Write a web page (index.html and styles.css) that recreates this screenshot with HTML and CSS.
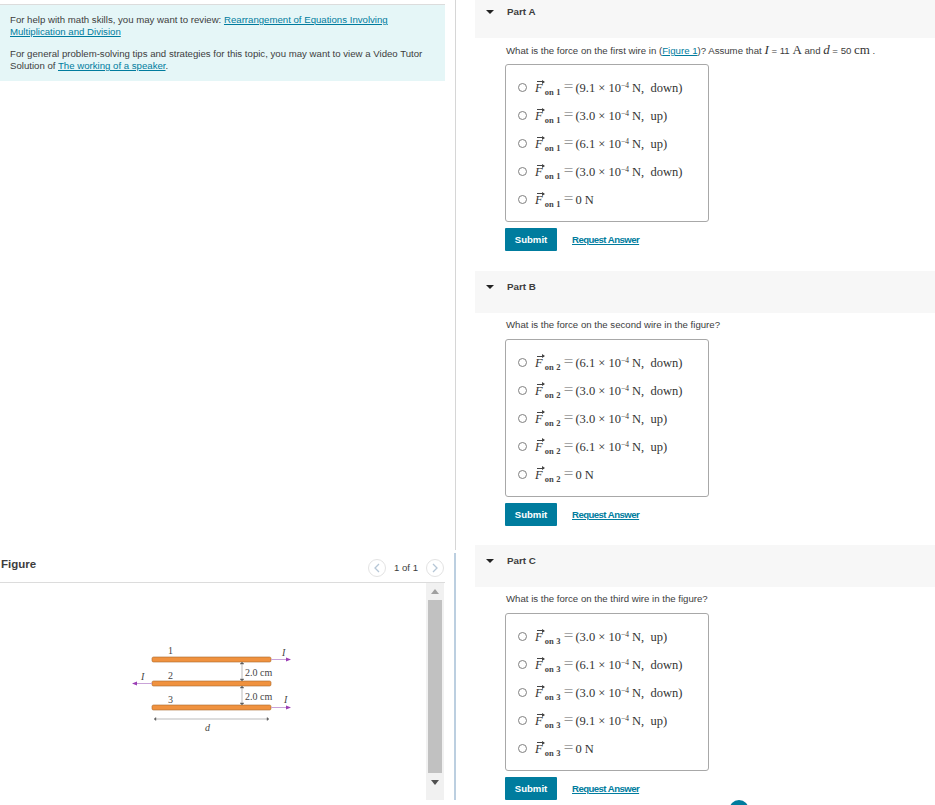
FILE: index.html
```html
<!DOCTYPE html>
<html lang="en">
<head>
<meta charset="utf-8">
<title>Part A, B, C</title>
<link rel="stylesheet" href="styles.css">
</head>
<body>
<div class="page">
  <div class="left">
    <section class="hints">
      <div class="hint-box">
        <p>For help with math skills, you may want to review: <a href="#">Rearrangement of Equations Involving Multiplication and Division</a></p>
        <p>For general problem-solving tips and strategies for this topic, you may want to view a Video Tutor Solution of <a href="#">The working of a speaker</a>.</p>
      </div>
    </section>
    <section class="figure">
      <header class="fig-head">
        <h2>Figure</h2>
        <div class="pager">
          <span class="circle"><svg width="8" height="10" viewBox="0 0 8 10"><path d="M6 1 2 5l4 4" fill="none" stroke="#b5c6d6" stroke-width="1.3"/></svg></span>
          <span class="count">1 of 1</span>
          <span class="circle"><svg width="8" height="10" viewBox="0 0 8 10"><path d="M2 1l4 4-4 4" fill="none" stroke="#b5c6d6" stroke-width="1.3"/></svg></span>
        </div>
      </header>
      <div class="fig-body">
        <div class="fig-canvas">
          <svg class="diagram" width="190" height="105" viewBox="0 0 190 105">
            <g class="wire">
              <rect x="32" y="22" width="119" height="5" rx="1.5"/>
              <rect x="32" y="46" width="119" height="5" rx="1.5"/>
              <rect x="32" y="70" width="119" height="5" rx="1.5"/>
            </g>
            <g class="current">
              <path d="M151 24.500h17M151 72.500h17M32 48.500H17"/>
            </g>
            <g class="current-head">
              <path d="M171 24.500l-5-2v4zM171 72.500l-5-2v4zM12 48.500l5-2v4z"/>
            </g>
            <g class="dim">
              <path d="M122 28v17M122 52v17M35 84h113"/>
              <path d="M122 27l-2 2h4zM122 46l-2-2h4zM122 51l-2 2h4zM122 70l-2-2h4zM34 84l2-1.500v3zM149 84l-2-1.500v3z"/>
            </g>
            <text class="fig-text" x="48" y="19">1</text>
            <text class="fig-text" x="48" y="44">2</text>
            <text class="fig-text" x="48" y="68">3</text>
            <text class="fig-text" x="125" y="41">2.0 cm</text>
            <text class="fig-text" x="125" y="65">2.0 cm</text>
            <text class="fig-text ital" x="162" y="21">I</text>
            <text class="fig-text ital" x="21" y="45">I</text>
            <text class="fig-text ital" x="164" y="68">I</text>
            <text class="fig-text ital" x="85" y="96">d</text>
          </svg>
        </div>
        <div class="scrollbar">
          <span class="arrow up"></span>
          <span class="thumb"></span>
          <span class="arrow down"></span>
        </div>
      </div>
    </section>
  </div>

  <main class="right">
    <section class="part part-a">
      <header class="part-head"><span class="caret"></span><h3>Part A</h3></header>
      <p class="question">What is the force on the first wire in (<a href="#">Figure 1</a>)? Assume that <i class="m big">I</i> = 11 <span class="m big">A</span> and <i class="m big">d</i> = 50 <span class="m big">cm</span> .</p>
      <div class="choices">
        <label class="choice"><input type="radio" name="a"><span class="m"><span class="vec">F</span><sub>on 1</sub><span class="eq">=</span>(9.1 × 10<sup>−4</sup> N,&nbsp; down)</span></label>
        <label class="choice"><input type="radio" name="a"><span class="m"><span class="vec">F</span><sub>on 1</sub><span class="eq">=</span>(3.0 × 10<sup>−4</sup> N,&nbsp; up)</span></label>
        <label class="choice"><input type="radio" name="a"><span class="m"><span class="vec">F</span><sub>on 1</sub><span class="eq">=</span>(6.1 × 10<sup>−4</sup> N,&nbsp; up)</span></label>
        <label class="choice"><input type="radio" name="a"><span class="m"><span class="vec">F</span><sub>on 1</sub><span class="eq">=</span>(3.0 × 10<sup>−4</sup> N,&nbsp; down)</span></label>
        <label class="choice"><input type="radio" name="a"><span class="m"><span class="vec">F</span><sub>on 1</sub><span class="eq">=</span>0 N</span></label>
      </div>
      <div class="actions"><button class="submit">Submit</button><a class="request" href="#">Request Answer</a></div>
    </section>

    <section class="part">
      <header class="part-head"><span class="caret"></span><h3>Part B</h3></header>
      <p class="question">What is the force on the second wire in the figure?</p>
      <div class="choices">
        <label class="choice"><input type="radio" name="b"><span class="m"><span class="vec">F</span><sub>on 2</sub><span class="eq">=</span>(6.1 × 10<sup>−4</sup> N,&nbsp; down)</span></label>
        <label class="choice"><input type="radio" name="b"><span class="m"><span class="vec">F</span><sub>on 2</sub><span class="eq">=</span>(3.0 × 10<sup>−4</sup> N,&nbsp; down)</span></label>
        <label class="choice"><input type="radio" name="b"><span class="m"><span class="vec">F</span><sub>on 2</sub><span class="eq">=</span>(3.0 × 10<sup>−4</sup> N,&nbsp; up)</span></label>
        <label class="choice"><input type="radio" name="b"><span class="m"><span class="vec">F</span><sub>on 2</sub><span class="eq">=</span>(6.1 × 10<sup>−4</sup> N,&nbsp; up)</span></label>
        <label class="choice"><input type="radio" name="b"><span class="m"><span class="vec">F</span><sub>on 2</sub><span class="eq">=</span>0 N</span></label>
      </div>
      <div class="actions"><button class="submit">Submit</button><a class="request" href="#">Request Answer</a></div>
    </section>

    <section class="part">
      <header class="part-head"><span class="caret"></span><h3>Part C</h3></header>
      <p class="question">What is the force on the third wire in the figure?</p>
      <div class="choices">
        <label class="choice"><input type="radio" name="c"><span class="m"><span class="vec">F</span><sub>on 3</sub><span class="eq">=</span>(3.0 × 10<sup>−4</sup> N,&nbsp; up)</span></label>
        <label class="choice"><input type="radio" name="c"><span class="m"><span class="vec">F</span><sub>on 3</sub><span class="eq">=</span>(6.1 × 10<sup>−4</sup> N,&nbsp; down)</span></label>
        <label class="choice"><input type="radio" name="c"><span class="m"><span class="vec">F</span><sub>on 3</sub><span class="eq">=</span>(3.0 × 10<sup>−4</sup> N,&nbsp; down)</span></label>
        <label class="choice"><input type="radio" name="c"><span class="m"><span class="vec">F</span><sub>on 3</sub><span class="eq">=</span>(9.1 × 10<sup>−4</sup> N,&nbsp; up)</span></label>
        <label class="choice"><input type="radio" name="c"><span class="m"><span class="vec">F</span><sub>on 3</sub><span class="eq">=</span>0 N</span></label>
      </div>
      <div class="actions"><button class="submit">Submit</button><a class="request" href="#">Request Answer</a></div>
    </section>
  </main>
</div>
<span class="help-badge"></span>
</body>
</html>
```
FILE: styles.css
```css
* { box-sizing: border-box; }
html, body { height: 100%; }
body {
  margin: 0;
  height: 805px;
  overflow: hidden;
  background: #fff;
  color: #3d3d3d;
  font-family: "Liberation Sans", Arial, sans-serif;
  font-size: 9.630px;
}
a { color: #007c9e; text-decoration: underline; }
p { margin: 0; }

.page { display: flex; height: 800px; align-items: flex-start; }

/* left column */
.left { width: 456px; height: 800px; display: flex; flex-direction: column; flex: none; }
.hints { height: 550px; padding: 4px 10px 0 0; border-right: 1px solid #d6d6d6; flex: none; }
.hint-box {
  background: #e5f6f7;
  border-top: 1px solid #dcdcdc;
  height: 77px;
  padding: 9px 10px 0;
  line-height: 12px;
}
.hint-box p + p { margin-top: 10px; }

.figure { margin-top: 3px; flex: 1; display: flex; flex-direction: column; border-right: 2px solid #bccfe0; min-height: 0; }
.fig-head {
  height: 30px;
  margin-right: 9px;
  padding: 0 1px;
  display: flex;
  align-items: center;
  justify-content: space-between;
  border-bottom: 1px solid #dcdcdc;
}
.fig-head h2 { margin: 0 0 8px; font-size: 11.500px; font-weight: bold; color: #3d3d3d; }
.pager { display: flex; align-items: center; gap: 8px; }
.count { font-size: 9.600px; color: #3d3d3d; }
.circle {
  width: 18px; height: 18px;
  border: 1px solid #e3e3e3;
  border-radius: 50%;
  display: flex; align-items: center; justify-content: center;
}
.fig-body { flex: 1; display: flex; margin-right: 10px; min-height: 0; }
.fig-canvas { flex: 1; padding: 52px 0 0 120px; }
.diagram { display: block; }
.wire rect { fill: #f0923f; stroke: #a8682c; stroke-width: .6; }
.current { fill: none; stroke: #c9a3d8; stroke-width: 1; }
.current-head { fill: #9b3fb5; }
.dim path { fill: #555; stroke: #777; stroke-width: .5; }
.fig-text { font-family: "Liberation Serif", serif; font-size: 10px; fill: #444; }
.ital { font-style: italic; }

.scrollbar {
  width: 18px;
  flex: none;
  background: #f1f1f1;
  display: flex;
  flex-direction: column;
  align-items: center;
  padding-top: 6px;
}
.thumb { width: 14px; height: 173px; background: #c1c1c1; margin: 6px 0 7px; flex: none; }
.arrow { width: 0; height: 0; border-left: 4px solid transparent; border-right: 4px solid transparent; flex: none; }
.arrow.up { border-bottom: 5px solid #a0a0a0; }
.arrow.down { border-top: 5px solid #505050; }

/* right column */
.right { flex: 1; margin-top: -4px; padding-left: 19px; display: flex; flex-direction: column; gap: 19.500px; }
.part-head {
  height: 42px;
  background: #f7f7f7;
  display: flex;
  align-items: flex-start;
  padding: 10px 0 0 11px;
}
.part-head h3 { margin: 0 0 0 13px; font-size: 9.800px; font-weight: bold; color: #3d3d3d; line-height: 12px; }
.caret {
  width: 0; height: 0; margin-top: 4px;
  border-left: 4px solid transparent;
  border-right: 4px solid transparent;
  border-top: 4px solid #222;
}
.question { margin: 5px 0 0 31px; height: 14px; line-height: 14px; }
.m { font-family: "Liberation Serif", "Times New Roman", serif; font-size: 12.500px; color: #333; }
.m.big { font-size: 13px; }
.choices {
  width: 204px;
  height: 158px;
  margin: 7px 0 0 30px;
  padding: 9px 0 0 12px;
  border: 1px solid #a8a8a8;
  border-radius: 3px;
  display: flex;
  flex-direction: column;
}
.choice { height: 28px; display: flex; align-items: flex-start; gap: 8px; line-height: 28px; }
.choice input {
  appearance: none;
  width: 9px; height: 9px;
  margin: 9px 0 0;
  border: 1px solid #808080;
  border-radius: 50%;
  background: #fff;
  flex: none;
}
.choice .m { white-space: nowrap; }
.vec { position: relative; font-style: italic; }
.vec::after {
  content: "";
  position: absolute;
  left: 2px; top: 0;
  width: 7px;
  border-top: 1px solid #444;
}
.vec::before {
  content: "";
  position: absolute;
  left: 7px; top: -1.500px;
  border-left: 3px solid #444;
  border-top: 2px solid transparent;
  border-bottom: 2px solid transparent;
}
sub { font-size: 8.500px; font-weight: bold; vertical-align: -3px; line-height: 0; margin-left: 2px; letter-spacing: .2px; color: #444; }
sup { font-size: 7.500px; vertical-align: 4px; line-height: 0; }
.eq { color: #999; font-size: 17px; line-height: 0; margin: 0 2px 0 3px; }
.actions { display: flex; align-items: center; margin: 6px 0 0 30px; height: 23px; }
.submit {
  width: 52px; height: 23px;
  background: #007c9e;
  color: #fff;
  border: 0;
  border-radius: 1px;
  font-family: "Liberation Sans", Arial, sans-serif;
  font-size: 9.600px;
  font-weight: bold;
  padding: 0;
}
.request { margin-left: 15px; font-size: 9.600px; font-weight: bold; letter-spacing: -.55px; }

.help-badge {
  position: fixed;
  left: 729px; top: 800px;
  width: 20px; height: 20px;
  border-radius: 50%;
  background: #007c9e;
}
```
